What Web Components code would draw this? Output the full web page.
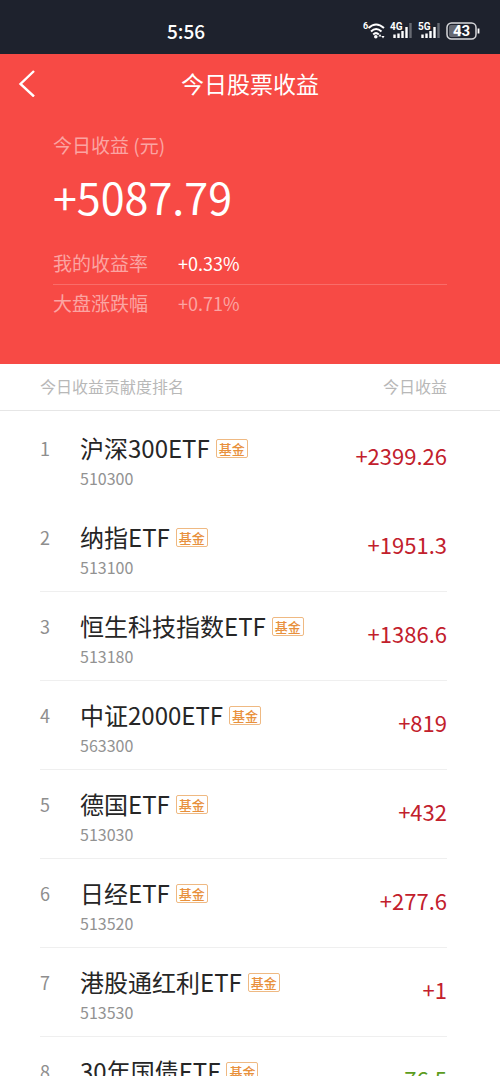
<!DOCTYPE html>
<html lang="zh-CN">
<head>
<meta charset="utf-8">
<meta name="viewport" content="width=device-width, initial-scale=1">
<title>今日股票收益</title>
<style>
  body {
    margin: 0;
    background: #fff;
    font-family: "Noto Sans CJK SC", sans-serif;
  }
</style>
</head>
<body>
<profit-page>
  <status-bar slot="status" time="5:56" battery="43"></status-bar>
  <nav-bar slot="nav">今日股票收益</nav-bar>
  <profit-summary slot="summary" label="今日收益 (元)" total="+5087.79">
    <rate-row label="我的收益率" value="+0.33%"></rate-row>
    <rate-row label="大盘涨跌幅" value="+0.71%" muted></rate-row>
  </profit-summary>
  <rank-list label="今日收益贡献度排名" value-label="今日收益">
    <fund-row rank="1" name="沪深300ETF" code="510300" amount="+2399.26" tag="基金"></fund-row>
    <fund-row rank="2" name="纳指ETF" code="513100" amount="+1951.3" tag="基金"></fund-row>
    <fund-row rank="3" name="恒生科技指数ETF" code="513180" amount="+1386.6" tag="基金"></fund-row>
    <fund-row rank="4" name="中证2000ETF" code="563300" amount="+819" tag="基金"></fund-row>
    <fund-row rank="5" name="德国ETF" code="513030" amount="+432" tag="基金"></fund-row>
    <fund-row rank="6" name="日经ETF" code="513520" amount="+277.6" tag="基金"></fund-row>
    <fund-row rank="7" name="港股通红利ETF" code="513530" amount="+1" tag="基金"></fund-row>
    <fund-row rank="8" name="30年国债ETF" amount="-76.5" tag="基金"></fund-row>
  </rank-list>
</profit-page>

<script>
class BaseElement extends HTMLElement {
  constructor() {
    super();
    const template = document.createElement('template');
    template.innerHTML = this.constructor.markup;
    this.attachShadow({ mode: 'open' });
    this.shadowRoot.appendChild(template.content.cloneNode(true));
  }

  // copies each attribute into the node with the same data-text
  connectedCallback() {
    this.shadowRoot.querySelectorAll('[data-text]').forEach((el) => {
      el.textContent = this.getAttribute(el.dataset.text) || '';
    });
  }
}

class ProfitPage extends BaseElement {
  static markup = `
    <style>
      :host {
        display: flex;
        flex-direction: column;
        height: 100vh;
        overflow: hidden;
      }
      header { background: #f74a45; }
      main {
        flex: 1;
        min-height: 0;
        overflow-y: auto;
        scrollbar-width: none;
      }
    </style>
    <slot name="status"></slot>
    <header>
      <slot name="nav"></slot>
      <slot name="summary"></slot>
    </header>
    <main><slot></slot></main>
  `;
}

class StatusBar extends BaseElement {
  static markup = `
    <style>
      :host {
        display: grid;
        grid-template-columns: 3fr 2fr;
        align-items: center;
        box-sizing: border-box;
        height: 54px;
        padding: 8px 20px 0 60px;
        background: #1e222d;
        color: #fff;
      }
      .time {
        text-align: center;
        font-size: 19px;
        font-weight: 500;
        line-height: 24px;
      }
      .icons {
        display: flex;
        justify-content: flex-end;
        align-items: center;
        gap: 5px;
      }
      svg {
        display: block;
        overflow: visible;
      }
      svg text {
        font-family: Roboto, sans-serif;
        font-weight: 700;
      }
    </style>
    <span class="time" data-text="time"></span>
    <div class="icons">
      <svg width="22" height="18" viewBox="0 0 22 18" fill="none" stroke="#fff" stroke-width="2">
        <text x="0" y="7" font-size="9" fill="#fff" stroke="none">6</text>
        <path d="M5.500 6Q13 -1 21 6M8 9.500Q13 4.500 18.500 9.500M10.200 12.400Q13 9.800 15.800 12.400"/>
        <circle cx="12.800" cy="14.800" r="1.800" fill="#fff" stroke="none"/>
        <path d="M17 12l1.500 2.500H15.500zM20 16.500l-1.500-2.500h3z" fill="#fff" stroke="none"/>
      </svg>
      <svg width="23" height="18" viewBox="0 0 23 18">
        <text x="0" y="8" font-size="10" fill="#fff">4G</text>
        <path d="M4.500 12.500V16M8.500 11.500V16M12.500 9V16M16.500 5V16" stroke="#fff" stroke-width="2.400"/>
        <path d="M20.500 1V16" stroke="#686b73" stroke-width="2.400"/>
      </svg>
      <svg width="23" height="18" viewBox="0 0 23 18">
        <text x="0" y="8" font-size="10" fill="#fff">5G</text>
        <path d="M4.500 12.500V16M8.500 11.500V16M12.500 9V16M16.500 5V16" stroke="#fff" stroke-width="2.400"/>
        <path d="M20.500 1V16" stroke="#686b73" stroke-width="2.400"/>
      </svg>
      <svg width="34" height="18" viewBox="0 0 34 18">
        <rect x="3" y="3" width="12" height="12" rx="2" fill="#666972"/>
        <rect x="1" y="1" width="29" height="16" rx="4.500" fill="none" stroke="#d6d7da" stroke-width="1.500"/>
        <path d="M32.500 6.500v5" stroke="#fff" stroke-width="1.800"/>
        <text data-text="battery" x="15.500" y="14" font-size="15" fill="#fff" text-anchor="middle"></text>
      </svg>
    </div>
  `;
}

class NavBar extends BaseElement {
  static markup = `
    <style>
      :host {
        display: grid;
        grid-template-columns: 54px 1fr 54px;
        align-items: center;
        height: 58px;
        color: #fff;
      }
      button {
        display: flex;
        justify-content: center;
        padding: 0;
        border: 0;
        background: none;
        color: inherit;
      }
      h1 {
        margin: 0;
        text-align: center;
        font-size: 23px;
        font-weight: 400;
        line-height: 32px;
      }
    </style>
    <button type="button" aria-label="返回">
      <svg width="18" height="28" viewBox="0 0 18 28" fill="none" stroke="currentColor" stroke-width="2.400">
        <path d="M16 2L2.500 15L16 27.500"/>
      </svg>
    </button>
    <h1><slot></slot></h1>
  `;
}

class ProfitSummary extends BaseElement {
  static markup = `
    <style>
      :host {
        display: block;
        padding: 20px 53px 40px;
        color: #fff;
      }
      .label {
        color: #fba4a2;
        font-size: 19px;
        line-height: 26px;
      }
      .total {
        margin: 10px 0 21px;
        font-size: 43px;
        line-height: 56px;
      }
    </style>
    <div class="label" data-text="label"></div>
    <div class="total" data-text="total"></div>
    <slot></slot>
  `;
}

class RateRow extends BaseElement {
  static markup = `
    <style>
      :host {
        display: flex;
        gap: 30px;
        padding: 5px 0 8px;
        font-size: 18px;
        line-height: 26px;
      }
      :host(:not(:last-child)) { border-bottom: 1px solid #f96d69; }
      .label {
        width: 95px;
        color: #fba4a2;
        font-size: 19px;
      }
      :host([muted]) .value { color: #fba4a2; }
    </style>
    <span class="label" data-text="label"></span>
    <span class="value" data-text="value"></span>
  `;
}

class RankList extends BaseElement {
  static markup = `
    <style>
      :host { display: block; }
      .head {
        display: flex;
        justify-content: space-between;
        padding: 10px 53px 12px 40px;
        border-bottom: 1px solid #e6e6e6;
        color: #b8b8b8;
        font-size: 16px;
        line-height: 24px;
      }
      .rows { padding: 3px 53px 0 40px; }
    </style>
    <div class="head">
      <span data-text="label"></span>
      <span data-text="value-label"></span>
    </div>
    <div class="rows"><slot></slot></div>
  `;
}

class FundRow extends BaseElement {
  static markup = `
    <style>
      :host {
        display: grid;
        grid-template-columns: 40px 1fr auto;
        box-sizing: border-box;
        height: 89px;
        padding-top: 16px;
        border-bottom: 1px solid #efefef;
      }
      :host(:first-child) { border-bottom-color: transparent; }
      .rank {
        color: #8e8e8e;
        font-size: 18px;
        line-height: 36px;
      }
      .title {
        display: flex;
        align-items: center;
        gap: 6px;
      }
      .name {
        color: #262626;
        font-size: 24px;
        line-height: 36px;
      }
      .tag {
        padding: 0 2px;
        border: 1px solid #efb982;
        border-radius: 2px;
        color: #e8903c;
        font-size: 13px;
        font-weight: 500;
        line-height: 17px;
      }
      .code {
        color: #929292;
        font-size: 16px;
        line-height: 24px;
      }
      .amount {
        padding-top: 7px;
        color: #c2202c;
        font-size: 22px;
        line-height: 36px;
      }
      :host([amount^="-"]) .amount { color: #5c9c20; }
    </style>
    <span class="rank" data-text="rank"></span>
    <div>
      <div class="title">
        <span class="name" data-text="name"></span>
        <span class="tag" data-text="tag"></span>
      </div>
      <div class="code" data-text="code"></div>
    </div>
    <span class="amount" data-text="amount"></span>
  `;
}

customElements.define('profit-page', ProfitPage);
customElements.define('status-bar', StatusBar);
customElements.define('nav-bar', NavBar);
customElements.define('profit-summary', ProfitSummary);
customElements.define('rate-row', RateRow);
customElements.define('rank-list', RankList);
customElements.define('fund-row', FundRow);
</script>
</body>
</html>
